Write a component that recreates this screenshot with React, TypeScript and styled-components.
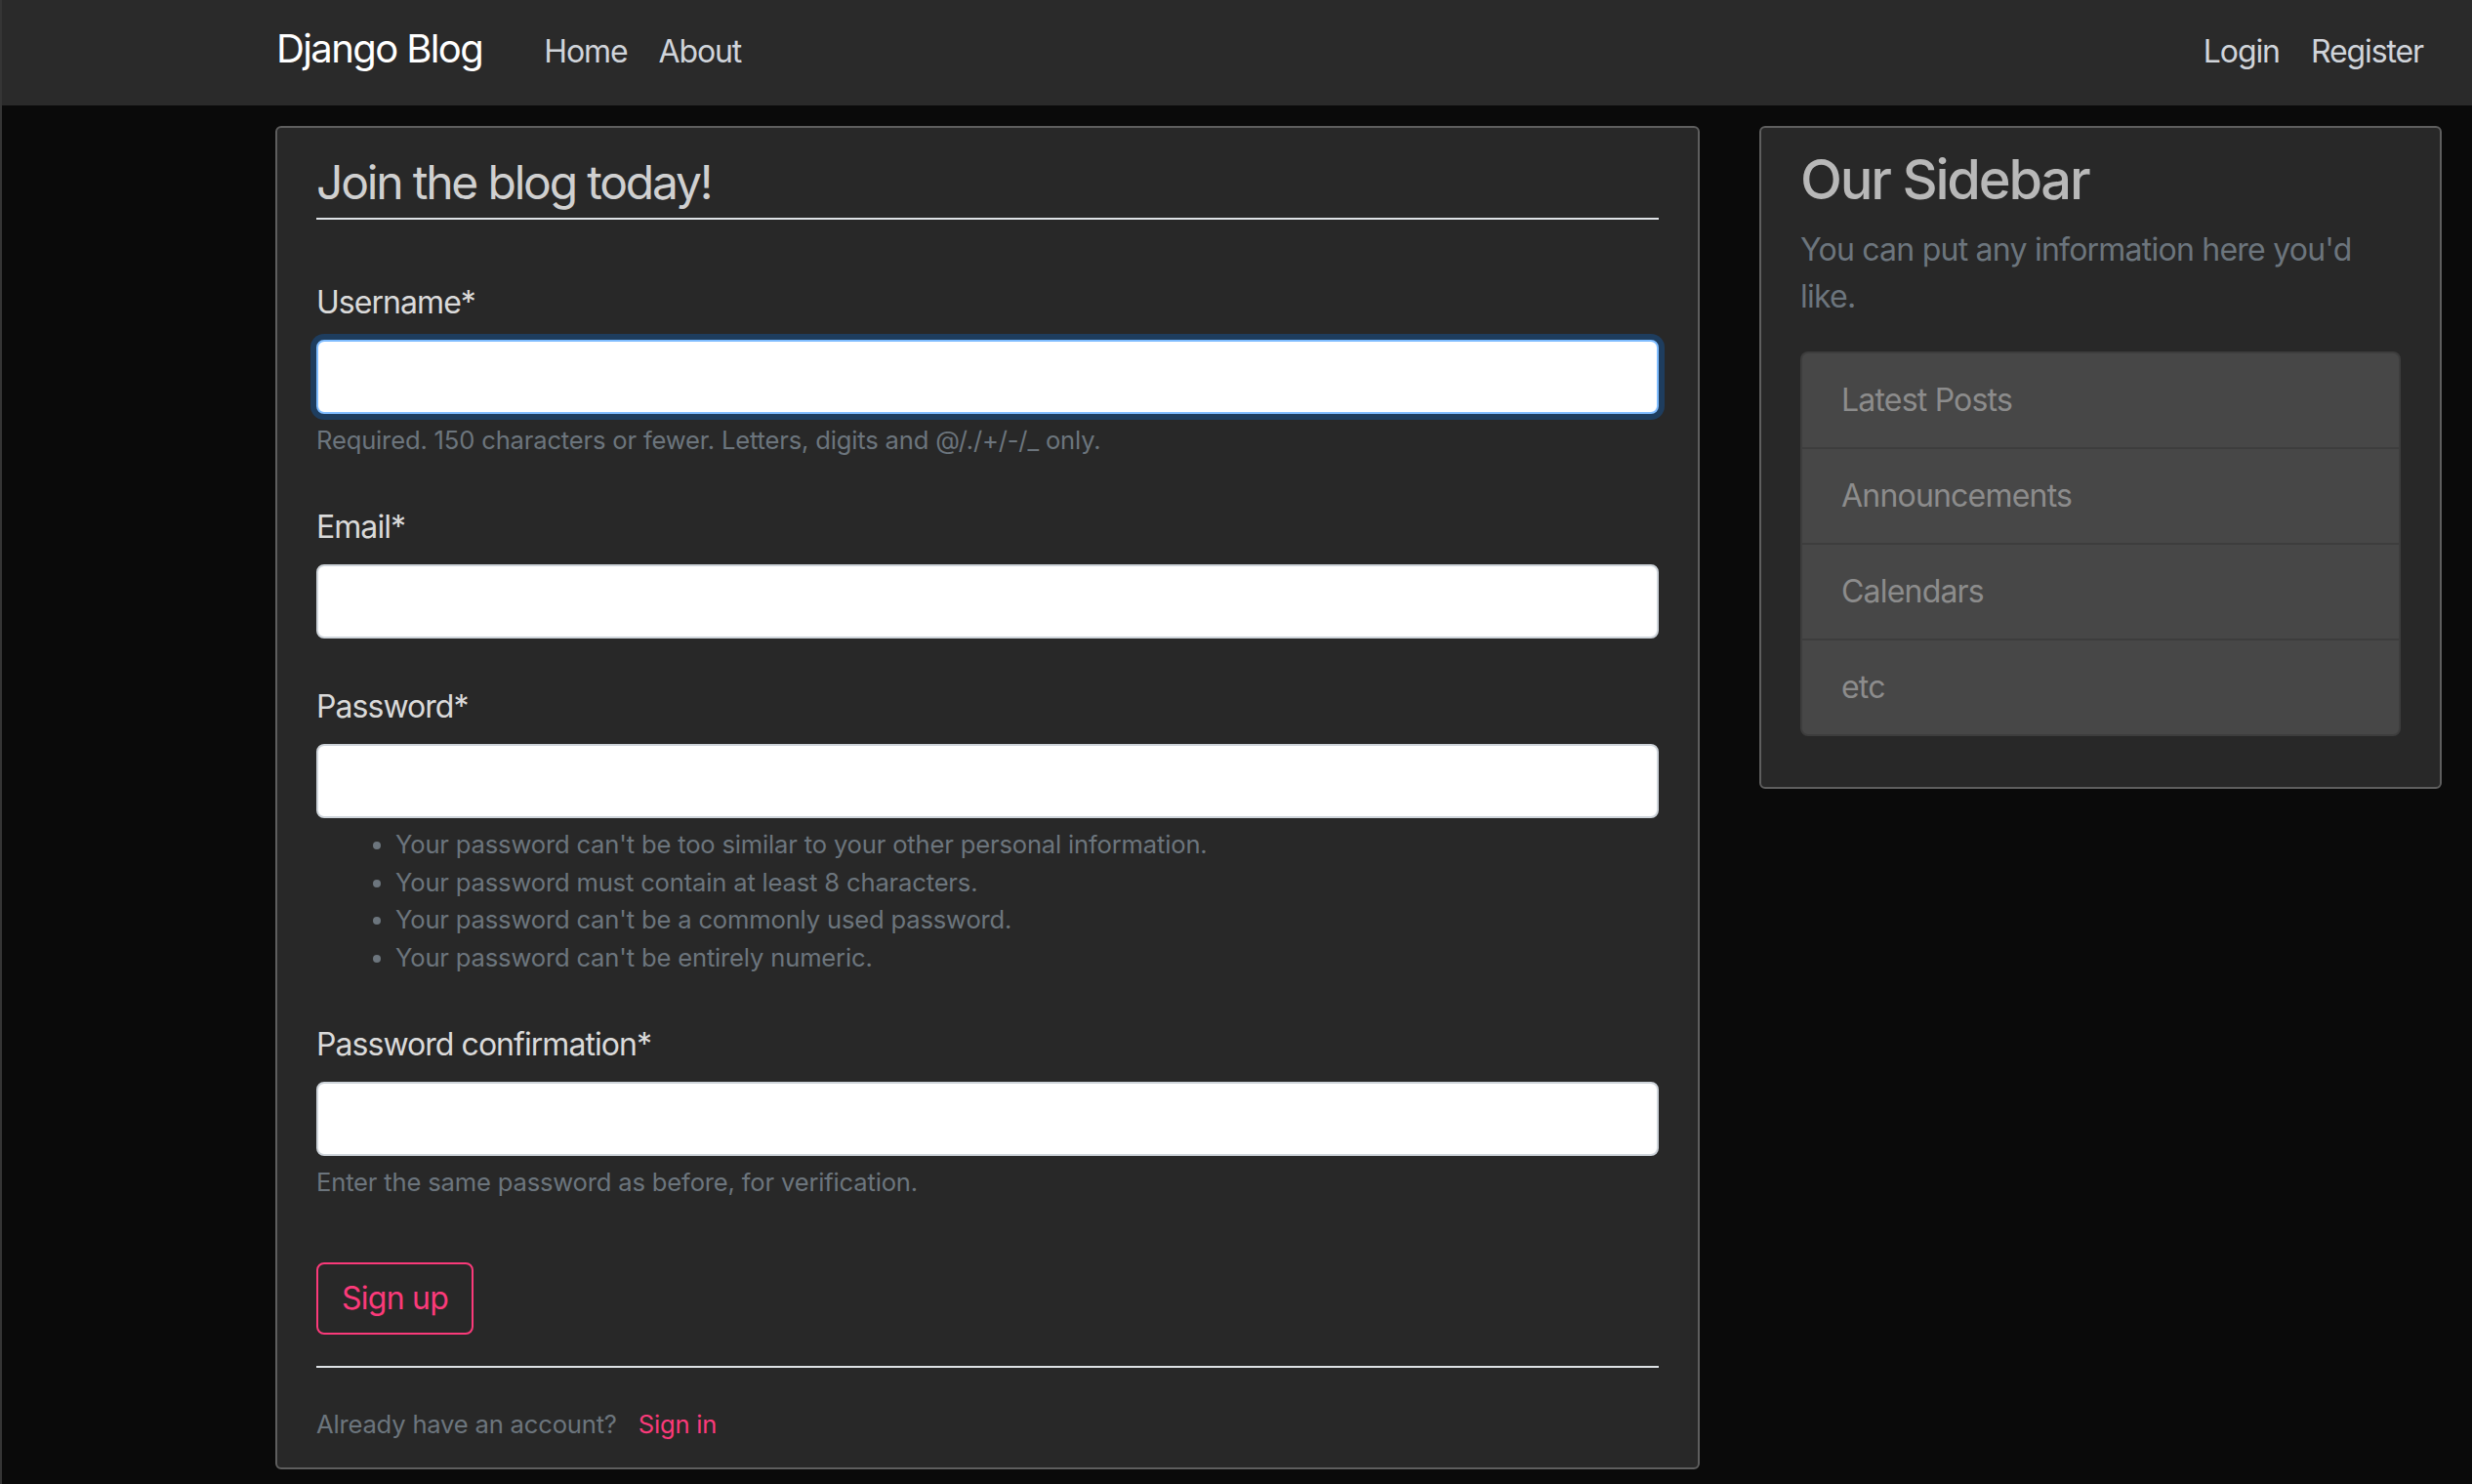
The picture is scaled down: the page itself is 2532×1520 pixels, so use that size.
import React from "react";
import styled, { createGlobalStyle } from "styled-components";

const GlobalStyle = createGlobalStyle`
  html, body {
    margin: 0;
    padding: 0;
    background: #0a0a0a;
    overflow: hidden;
  }
  body {
    font-family: Inter, "Noto Sans", "Liberation Sans", sans-serif;
    -webkit-font-smoothing: antialiased;
  }
  * { box-sizing: border-box; }
`;

const Page = styled.div`
  height: 1520px;
  overflow: hidden;
  border-left: 2px solid #353535;
  background: #0a0a0a;
`;

const NavBar = styled.header`
  height: 108px;
  background: #2a2a2a;
`;

const NavInner = styled.nav`
  display: flex;
  align-items: baseline;
  width: 2496px;
  padding: 20px 0 0 281px;
`;

const Brand = styled.a`
  font-size: 40px;
  line-height: 60px;
  letter-spacing: -1.6px;
  color: #ffffff;
  text-decoration: none;
  margin-right: 47px;
`;

const NavGroup = styled.div<{ $right?: boolean }>`
  display: flex;
  align-items: baseline;
  margin-left: ${(p) => (p.$right ? "auto" : "0")};
`;

const NavLink = styled.a`
  font-size: 32px;
  line-height: 48px;
  letter-spacing: -1.1px;
  padding: 0 16px;
  color: #d0d4da;
  text-decoration: none;
`;

const Main = styled.main`
  display: flex;
  align-items: flex-start;
  gap: 61px;
  padding-left: 280px;
  margin-top: 21px;
`;

const Card = styled.section<{ $width: number }>`
  width: ${(p) => p.$width}px;
  background: #282828;
  border: 2px solid #5e5e5e;
  border-radius: 6px;
  padding: 20px 40px;
`;

const Legend = styled.h2`
  margin: 0 0 61px;
  font-size: 48px;
  line-height: 72px;
  font-weight: 400;
  letter-spacing: -2.2px;
  color: #d0d0d0;
  border-bottom: 2px solid #dee2e6;
`;

const FieldGroup = styled.div<{ $gap?: number }>`
  margin-bottom: ${(p) => p.$gap ?? 46}px;
`;

const Label = styled.label`
  display: block;
  font-size: 32px;
  line-height: 48px;
  letter-spacing: -0.95px;
  margin-bottom: 14px;
  color: #dadada;
`;

const Input = styled.input<{ $focused?: boolean }>`
  display: block;
  width: 100%;
  height: 76px;
  background: #ffffff;
  border: 2px solid ${(p) => (p.$focused ? "#80bdff" : "#ced4da")};
  border-radius: 8px;
  box-shadow: ${(p) => (p.$focused ? "0 0 0 6px rgba(0, 123, 255, 0.25)" : "none")};
  outline: none;
  font-size: 32px;
  padding: 12px 24px;
`;

const HelpText = styled.div`
  margin-top: 8px;
  font-size: 25.6px;
  line-height: 38.4px;
  letter-spacing: -0.18px;
  color: #6c757d;
`;

const HelpList = styled.ul`
  margin: 0;
  padding-left: 81px;
`;

const OutlineButton = styled.button`
  display: inline-block;
  font-family: inherit;
  font-size: 32px;
  line-height: 48px;
  letter-spacing: -0.75px;
  padding: 11px 24px;
  color: #fb3a7a;
  background: transparent;
  border: 2px solid #fb3a7a;
  border-radius: 8px;
`;

const FooterRow = styled.div`
  margin-top: 32px;
  border-top: 2px solid #dee2e6;
  padding-top: 32px;
  font-size: 32px;
  line-height: 48px;
`;

const Muted = styled.small`
  font-size: 25.6px;
  letter-spacing: -0.2px;
  color: #6c757d;
`;

const PinkLink = styled.a`
  font-size: 25.6px;
  letter-spacing: -0.2px;
  color: #fb3a7a;
  text-decoration: none;
  margin-left: 22px;
`;

const SideTitle = styled.h3`
  margin: 0 0 14px;
  font-size: 56px;
  line-height: 67px;
  font-weight: 500;
  letter-spacing: -2.2px;
  color: #b8b8b8;
`;

const SideText = styled.p`
  margin: 0 0 32px;
  font-size: 32px;
  line-height: 48px;
  letter-spacing: -0.77px;
  color: #6c757d;
`;

const ListGroup = styled.ul`
  list-style: none;
  margin: 0 0 32px;
  padding: 0;
  background: #474747;
  border: 2px solid rgba(0, 0, 0, 0.13);
  border-radius: 8px;
`;

const ListItem = styled.li`
  padding: 24px 40px;
  font-size: 32px;
  line-height: 48px;
  letter-spacing: -0.8px;
  color: #8c8c8c;
  & + & {
    border-top: 2px solid rgba(0, 0, 0, 0.13);
  }
`;

const passwordRules = [
  "Your password can't be too similar to your other personal information.",
  "Your password must contain at least 8 characters.",
  "Your password can't be a commonly used password.",
  "Your password can't be entirely numeric.",
];

const sidebarItems = ["Latest Posts", "Announcements", "Calendars", "etc"];

export default function App() {
  return (
    <Page>
      <GlobalStyle />
      <NavBar>
        <NavInner>
          <Brand href="#">Django Blog</Brand>
          <NavGroup>
            <NavLink href="#">Home</NavLink>
            <NavLink href="#">About</NavLink>
          </NavGroup>
          <NavGroup $right>
            <NavLink href="#">Login</NavLink>
            <NavLink href="#">Register</NavLink>
          </NavGroup>
        </NavInner>
      </NavBar>
      <Main>
        <Card $width={1459}>
          <Legend>Join the blog today!</Legend>
          <FieldGroup>
            <Label>Username*</Label>
            <Input $focused />
            <HelpText>Required. 150 characters or fewer. Letters, digits and @/./+/-/_ only.</HelpText>
          </FieldGroup>
          <FieldGroup>
            <Label>Email*</Label>
            <Input type="email" />
          </FieldGroup>
          <FieldGroup>
            <Label>Password*</Label>
            <Input type="password" />
            <HelpText>
              <HelpList>
                {passwordRules.map((r) => (
                  <li key={r}>{r}</li>
                ))}
              </HelpList>
            </HelpText>
          </FieldGroup>
          <FieldGroup $gap={63}>
            <Label>Password confirmation*</Label>
            <Input type="password" />
            <HelpText>Enter the same password as before, for verification.</HelpText>
          </FieldGroup>
          <OutlineButton type="button">Sign up</OutlineButton>
          <FooterRow>
            <Muted>Already have an account?</Muted>
            <PinkLink href="#">Sign in</PinkLink>
          </FooterRow>
        </Card>
        <Card $width={699}>
          <SideTitle>Our Sidebar</SideTitle>
          <SideText>You can put any information here you'd like.</SideText>
          <ListGroup>
            {sidebarItems.map((i) => (
              <ListItem key={i}>{i}</ListItem>
            ))}
          </ListGroup>
        </Card>
      </Main>
    </Page>
  );
}
